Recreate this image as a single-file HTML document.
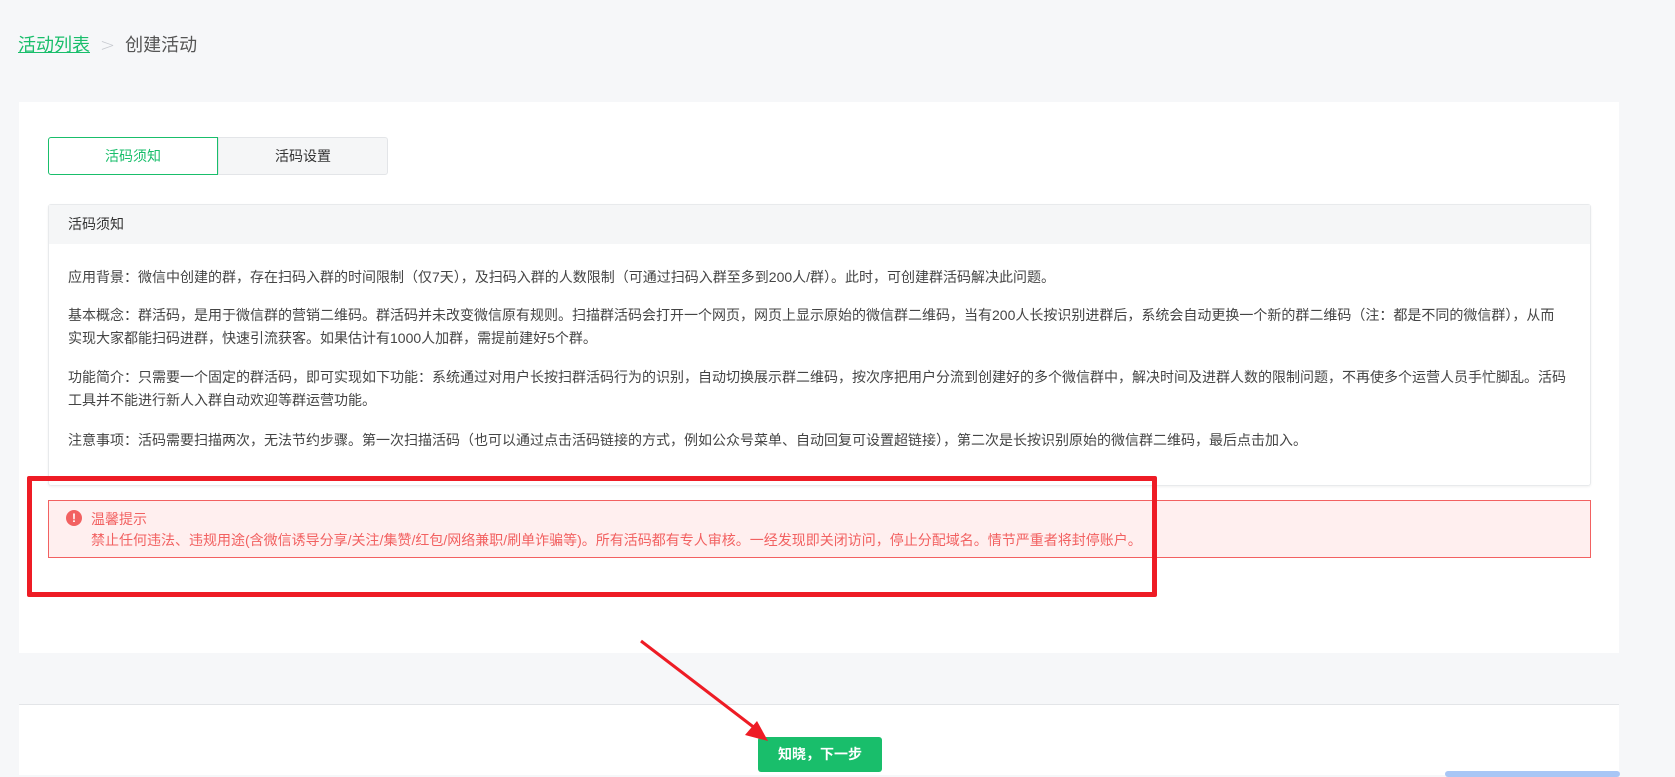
<!DOCTYPE html>
<html><head><meta charset="utf-8"><style>
*{margin:0;padding:0;box-sizing:border-box}
body{width:1675px;height:775px;background:#f6f7f9;font-family:"Liberation Sans","Noto Sans CJK SC",sans-serif;position:relative;overflow:hidden;color:#333}
.bc{position:absolute;left:18px;top:31px;font-size:18px;color:#555}
.bc a{color:#19be6b;text-decoration:underline}
.bc .sep{color:#c5c8ce;margin:0 10px;font-size:18px;font-family:"DejaVu Sans",sans-serif;font-weight:200}
.panel{position:absolute;left:19px;top:102px;width:1600px;height:551px;background:#fff}
.tabs{position:absolute;left:48px;top:137px;width:340px;height:38px;display:flex;font-size:14px}
.tab{width:171px;display:flex;align-items:center;justify-content:center;border:1px solid #e3e5e8;background:#f5f6f7;border-radius:0 3px 3px 0;color:#333}
.tab.on{border:1px solid #19be6b;background:#fff;color:#19be6b;border-radius:3px 0 0 3px}
.card{position:absolute;left:48px;top:204px;width:1543px;height:282px;border:1px solid #e8eaec;border-radius:3px;box-shadow:0 1px 2px rgba(0,0,0,.06)}
.card .hd{height:39px;background:#f5f6f7;font-size:14px;line-height:39px;padding-left:19px;color:#333}
.card p{position:absolute;left:19px;width:1530px;white-space:nowrap;font-size:14px;line-height:23px;color:#444}
.alert{position:absolute;left:48px;top:500px;width:1543px;height:58px;border:1px solid #f26161;background:#ffefef;color:#f26161;font-size:14px}
.alert .ic{position:absolute;left:17px;top:9px;width:16px;height:16px;border-radius:50%;background:#f26161;color:#fff;font-size:12px;font-weight:bold;text-align:center;line-height:16px}
.alert .t{position:absolute;left:42px;top:8px}
.alert .d{position:absolute;left:42px;top:29px;font-size:14px}
.redbox{position:absolute;left:27px;top:476px;width:1130px;height:121px;border:5px solid #ee1c25;border-radius:2px}
.foot{position:absolute;left:19px;top:704px;width:1600px;height:71px;background:#fff;border-top:1px solid #e3e5e8}
.btn{position:absolute;left:758px;top:737px;width:124px;height:35px;background:#19be6b;color:#fff;font-size:14px;font-weight:bold;border-radius:3px;text-align:center;line-height:35px}
</style></head><body>
<div class="bc"><a>活动列表</a><span class="sep">&gt;</span>创建活动</div>
<div class="panel"></div>
<div class="tabs"><div class="tab on">活码须知</div><div class="tab">活码设置</div></div>
<div class="card"><div class="hd">活码须知</div>
<p style="top:61px">应用背景：微信中创建的群，存在扫码入群的时间限制（仅7天），及扫码入群的人数限制（可通过扫码入群至多到200人/群）。此时，可创建群活码解决此问题。</p>
<p style="top:99px">基本概念：群活码，是用于微信群的营销二维码。群活码并未改变微信原有规则。扫描群活码会打开一个网页，网页上显示原始的微信群二维码，当有200人长按识别进群后，系统会自动更换一个新的群二维码（注：都是不同的微信群），从而<br>实现大家都能扫码进群，快速引流获客。如果估计有1000人加群，需提前建好5个群。</p>
<p style="top:161px">功能简介：只需要一个固定的群活码，即可实现如下功能：系统通过对用户长按扫群活码行为的识别，自动切换展示群二维码，按次序把用户分流到创建好的多个微信群中，解决时间及进群人数的限制问题，不再使多个运营人员手忙脚乱。活码<br>工具并不能进行新人入群自动欢迎等群运营功能。</p>
<p style="top:224px">注意事项：活码需要扫描两次，无法节约步骤。第一次扫描活码（也可以通过点击活码链接的方式，例如公众号菜单、自动回复可设置超链接），第二次是长按识别原始的微信群二维码，最后点击加入。</p>
</div>
<div class="alert"><div class="ic">!</div><div class="t">温馨提示</div><div class="d">禁止任何违法、违规用途(含微信诱导分享/关注/集赞/红包/网络兼职/刷单诈骗等)。所有活码都有专人审核。一经发现即关闭访问，停止分配域名。情节严重者将封停账户。</div></div>
<div class="redbox"></div>
<div class="foot"></div>
<div class="btn">知晓，下一步</div>
<svg style="position:absolute;left:0;top:0" width="1675" height="775"><line x1="641" y1="641" x2="760" y2="732" stroke="#ee1c25" stroke-width="3"/><polygon points="768,741 745,735 757,721" fill="#ee1c25"/></svg>
<div style="position:absolute;left:1445px;top:771px;width:175px;height:6px;background:#a8c6f5;border-radius:3px"></div>
</body></html>
